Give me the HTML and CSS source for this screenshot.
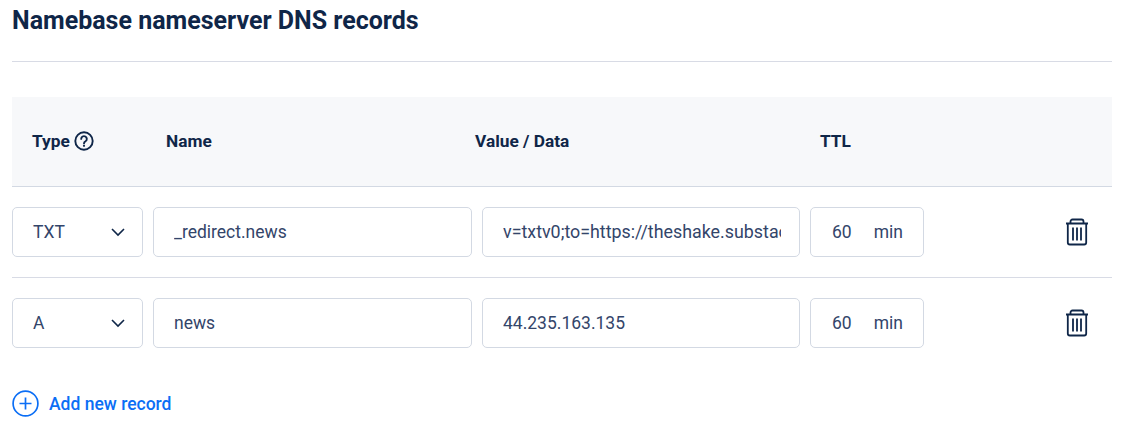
FILE: index.html
```html
<!DOCTYPE html>
<html lang="en">
<head>
<meta charset="utf-8">
<title>DNS records</title>
<link rel="stylesheet" href="styles.css">
</head>
<body>
<main class="page">
  <h2 class="title">Namebase nameserver DNS records</h2>
  <div class="table">
    <div class="row head">
      <div class="c-type type-head">Type
        <svg class="help" width="20" height="20" viewBox="0 0 20 20" fill="none" stroke="currentColor" stroke-width="1.9"><circle cx="10" cy="10" r="8.7"/><path d="M7.2 7.9a2.8 2.8 0 1 1 4.3 2.4c-1 .6-1.5 1-1.5 2.1" stroke-linecap="round"/><circle cx="10" cy="14.8" r="1.1" fill="currentColor" stroke="none"/></svg>
      </div>
      <div class="c-name">Name</div>
      <div class="c-value">Value / Data</div>
      <div class="c-ttl">TTL</div>
    </div>
    <div class="row rec">
      <div class="box c-type sel">TXT<svg class="chev" width="16" height="10" viewBox="0 0 16 10" fill="none" stroke="currentColor" stroke-width="1.6"><path d="M2 2l6 6 6-6"/></svg></div>
      <input class="box c-name field" type="text" value="_redirect.news">
      <input class="box c-value field long" type="text" value="v=txtv0;to=https://theshake.substack.com">
      <div class="box c-ttl ttl"><span>60</span><span>min</span></div>
      <svg class="trash" width="24" height="28" viewBox="0 0 24 28" fill="none" stroke="currentColor" stroke-width="1.8"><path d="M1 5.5h22M2.8 5.5v19a2 2 0 0 0 2 2h14.400a2 2 0 0 0 2-2v-19M5.500 5.500V3.500a2 2 0 0 1 2-2h9a2 2 0 0 1 2 2v2M8 9.500v13M12 9.500v13M16 9.500v13"/></svg>
    </div>
    <div class="row rec">
      <div class="box c-type sel">A<svg class="chev" width="16" height="10" viewBox="0 0 16 10" fill="none" stroke="currentColor" stroke-width="1.6"><path d="M2 2l6 6 6-6"/></svg></div>
      <input class="box c-name field" type="text" value="news">
      <input class="box c-value field" type="text" value="44.235.163.135">
      <div class="box c-ttl ttl"><span>60</span><span>min</span></div>
      <svg class="trash" width="24" height="28" viewBox="0 0 24 28" fill="none" stroke="currentColor" stroke-width="1.8"><path d="M1 5.5h22M2.8 5.5v19a2 2 0 0 0 2 2h14.400a2 2 0 0 0 2-2v-19M5.500 5.500V3.500a2 2 0 0 1 2-2h9a2 2 0 0 1 2 2v2M8 9.500v13M12 9.500v13M16 9.500v13"/></svg>
    </div>
  </div>
  <div class="add">
    <svg width="27" height="27" viewBox="0 0 27 27" fill="none" stroke="currentColor" stroke-width="1.7"><circle cx="13.5" cy="13.5" r="12.400"/><path d="M13.500 7.500v12M7.500 13.500h12"/></svg>
    <span>Add new record</span>
  </div>
</main>
</body>
</html>
```
FILE: styles.css
```css
* { box-sizing: border-box; }
html, body { margin: 0; padding: 0; background: #fff; }
body { font-family: Roboto, sans-serif; color: #0f2648; overflow: hidden; }
.page { width: 1128px; height: 440px; padding: 0 16px 0 12px; }
.title {
  margin: 0;
  height: 62px;
  padding-top: 7px;
  font-size: 25px;
  line-height: 28px;
  font-weight: 700;
  border-bottom: 1px solid #d8dbe5;
}
.table { margin-top: 35px; }
.row { display: flex; gap: 10px; }
.head {
  height: 90px;
  padding-bottom: 2px;
  background: #f7f8fa;
  border-bottom: 1px solid #d3d9e3;
  align-items: center;
  font-size: 17.3px;
  font-weight: 700;
}
.head .c-type { padding-left: 20px; }
.head .c-name { padding-left: 13px; }
.head .c-value { margin-left: -7px; margin-right: 7px; }
.head .c-ttl { padding-left: 10px; }
.type-head { display: flex; align-items: center; gap: 4px; }
.help { display: block; }
.c-type { width: 131px; flex: none; }
.c-name { width: 319px; flex: none; }
.c-value { width: 318px; flex: none; }
.c-ttl { width: 114px; flex: none; }
.rec {
  height: 91px;
  padding-bottom: 1px;
  align-items: center;
  border-bottom: 1px solid #d8dbe5;
  font-size: 17.5px;
  color: #33456a;
}
.rec:last-child { border-bottom: 0; height: 90px; padding-bottom: 0; }
.box {
  height: 50px;
  border: 1px solid #d3d9e3;
  border-radius: 5px;
  display: flex;
  align-items: center;
  background: #fff;
}
.field {
  padding: 0 18px 0 20px;
  margin: 0;
  font: inherit;
  color: inherit;
  outline: none;
}
.long { font-size: 17.85px; }
.sel { justify-content: space-between; padding: 0 16px 0 20px; }
.chev { color: #0f2648; }
.ttl { padding: 0 20px 0 21px; justify-content: space-between; }
.trash { margin-left: auto; margin-right: 23px; color: #0f2648; }
.add {
  display: flex;
  align-items: center;
  gap: 10px;
  margin-top: 22px;
  color: #0b6ef5;
  font-size: 17.5px;
  font-weight: 500;
}
```
